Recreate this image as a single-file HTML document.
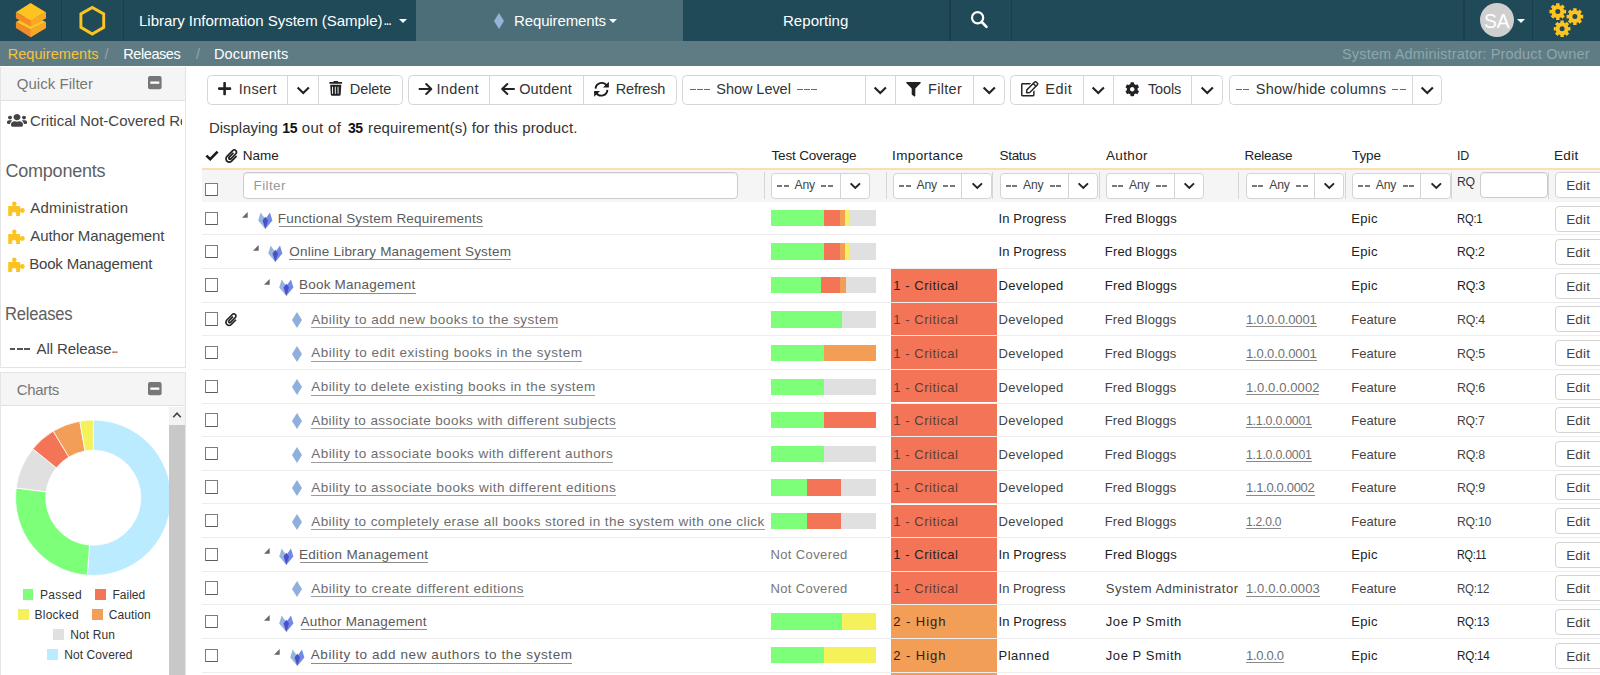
<!DOCTYPE html>
<html><head><meta charset="utf-8"><title>Requirements</title>
<style>
html,body{margin:0;padding:0;}
body{width:1600px;height:675px;overflow:hidden;background:#fff;font-family:"Liberation Sans",sans-serif;}
#root{position:relative;width:1600px;height:675px;overflow:hidden;background:#fff;}
.a{position:absolute;box-sizing:border-box;}
.t{white-space:pre;}
svg{position:absolute;overflow:visible;}

</style></head>
<body>
<div id="root">
<div class="a" style="left:0px;top:0px;width:1600px;height:41px;background:#204a58;"></div>
<div class="a" style="left:415.5px;top:0px;width:267px;height:41px;background:#4c6e78;"></div>
<div class="a" style="left:61px;top:0px;width:1.4px;height:41px;background:#1a3f4c;"></div>
<div class="a" style="left:122.8px;top:0px;width:1.4px;height:41px;background:#1a3f4c;"></div>
<div class="a" style="left:949.2px;top:0px;width:1.4px;height:41px;background:#1a3f4c;"></div>
<div class="a" style="left:1011px;top:0px;width:1.4px;height:41px;background:#1a3f4c;"></div>
<div class="a" style="left:1463.3px;top:0px;width:1.4px;height:41px;background:#1a3f4c;"></div>
<div class="a" style="left:1532px;top:0px;width:1.4px;height:41px;background:#1a3f4c;"></div>
<svg style="left:15px;top:2px" width="32" height="36" viewBox="15 2 32 36">
<polygon points="15.9,22 30.6,29.8 45.9,22 45.9,28.1 30.6,37.2 15.9,28.1" fill="#f58b27"/>
<polygon points="30.6,29.8 45.9,22 45.9,28.1 30.6,37.2" fill="#f9a825"/>
<polygon points="15.9,22 30.6,14.5 45.9,22 30.6,29.8" fill="#fdc421"/>
<polygon points="15.9,12.2 30.6,20 45.9,12.2 45.9,18.3 30.6,26.5 15.9,18.3" fill="#f58b27"/>
<polygon points="30.6,20 45.9,12.2 45.9,18.3 30.6,26.5" fill="#f9a825"/>
<polygon points="15.9,12.2 30.6,2.9 45.9,12.2 30.6,20" fill="#fdc421"/>
</svg>
<svg style="left:78px;top:4px" width="30" height="34" viewBox="78 4 30 34">
<polygon points="92.3,7.4 103.7,13.9 103.7,27.3 92.3,34 80.9,27.3 80.9,13.9" fill="none" stroke="#fdc421" stroke-width="2.9" stroke-linejoin="miter"/>
</svg>
<div class="a t" style="left:139.00px;top:9.90px;font-size:15px;line-height:21px;color:#fff;letter-spacing:-0.022px;">Library Information System (Sample)</div>
<div class="a t" style="left:383.90px;top:15.14px;font-size:10px;line-height:14px;color:#fff;letter-spacing:-0.250px;font-weight:700;transform:scaleX(0.9185);transform-origin:0 0;">...</div>
<div class="a" style="left:399px;top:19px;border-left:4px solid transparent;border-right:4px solid transparent;border-top:4.5px solid #fff"></div>
<svg style="left:494px;top:13px" width="10" height="16" viewBox="0 0 10 16"><polygon points="5,0 10,8 5,16 0,8" fill="#98b2d8"/></svg>
<div class="a t" style="left:514.00px;top:9.90px;font-size:15px;line-height:21px;color:#fff;letter-spacing:-0.125px;">Requirements</div>
<div class="a" style="left:608.8px;top:19px;border-left:4.1px solid transparent;border-right:4.1px solid transparent;border-top:4.6px solid #fff"></div>
<div class="a t" style="left:783.00px;top:9.90px;font-size:15px;line-height:21px;color:#fff;letter-spacing:0.038px;">Reporting</div>
<svg style="left:970px;top:10px" width="19" height="19" viewBox="0 0 19 19"><circle cx="7.6" cy="7.8" r="5.6" fill="none" stroke="#fff" stroke-width="2.2"/><line x1="11.8" y1="12" x2="16.5" y2="16.8" stroke="#fff" stroke-width="2.6" stroke-linecap="round"/></svg>
<div class="a" style="left:1480px;top:3px;width:34px;height:34px;background:#cfcfcf;border-radius:17px;"></div>
<div class="a t" style="left:1484.20px;top:7.64px;font-size:19.5px;line-height:27px;color:#fff;letter-spacing:-0.250px;transform:scaleX(0.9900);transform-origin:0 0;">SA</div>
<div class="a" style="left:1516.5px;top:19.3px;border-left:4.1px solid transparent;border-right:4.1px solid transparent;border-top:4.6px solid #fff"></div>
<svg style="left:0;top:0" width="1600" height="41"><path d="M1566.11,9.81 L1566.11,13.39 L1564.04,13.26 L1563.39,14.84 L1564.94,16.21 L1562.41,18.74 L1561.04,17.19 L1559.46,17.84 L1559.59,19.91 L1556.01,19.91 L1556.14,17.84 L1554.56,17.19 L1553.19,18.74 L1550.66,16.21 L1552.21,14.84 L1551.56,13.26 L1549.49,13.39 L1549.49,9.81 L1551.56,9.94 L1552.21,8.36 L1550.66,6.99 L1553.19,4.46 L1554.56,6.01 L1556.14,5.36 L1556.01,3.29 L1559.59,3.29 L1559.46,5.36 L1561.04,6.01 L1562.41,4.46 L1564.94,6.99 L1563.39,8.36 L1564.04,9.94Z M1560.30,11.60 A2.5,2.5 0 1,0 1555.30,11.60 A2.5,2.5 0 1,0 1560.30,11.60Z" fill="#fdc421" fill-rule="evenodd"/><path d="M1583.21,14.81 L1583.21,18.39 L1581.14,18.26 L1580.49,19.84 L1582.04,21.21 L1579.51,23.74 L1578.14,22.19 L1576.56,22.84 L1576.69,24.91 L1573.11,24.91 L1573.24,22.84 L1571.66,22.19 L1570.29,23.74 L1567.76,21.21 L1569.31,19.84 L1568.66,18.26 L1566.59,18.39 L1566.59,14.81 L1568.66,14.94 L1569.31,13.36 L1567.76,11.99 L1570.29,9.46 L1571.66,11.01 L1573.24,10.36 L1573.11,8.29 L1576.69,8.29 L1576.56,10.36 L1578.14,11.01 L1579.51,9.46 L1582.04,11.99 L1580.49,13.36 L1581.14,14.94Z M1577.40,16.60 A2.5,2.5 0 1,0 1572.40,16.60 A2.5,2.5 0 1,0 1577.40,16.60Z" fill="#fdc421" fill-rule="evenodd"/><path d="M1570.41,27.01 L1570.41,30.59 L1568.34,30.46 L1567.69,32.04 L1569.24,33.41 L1566.71,35.94 L1565.34,34.39 L1563.76,35.04 L1563.89,37.11 L1560.31,37.11 L1560.44,35.04 L1558.86,34.39 L1557.49,35.94 L1554.96,33.41 L1556.51,32.04 L1555.86,30.46 L1553.79,30.59 L1553.79,27.01 L1555.86,27.14 L1556.51,25.56 L1554.96,24.19 L1557.49,21.66 L1558.86,23.21 L1560.44,22.56 L1560.31,20.49 L1563.89,20.49 L1563.76,22.56 L1565.34,23.21 L1566.71,21.66 L1569.24,24.19 L1567.69,25.56 L1568.34,27.14Z M1564.60,28.80 A2.5,2.5 0 1,0 1559.60,28.80 A2.5,2.5 0 1,0 1564.60,28.80Z" fill="#fdc421" fill-rule="evenodd"/></svg>
<div class="a" style="left:0px;top:41px;width:1600px;height:25.2px;background:#5f7c85;"></div>
<div class="a t" style="left:7.75px;top:43.98px;font-size:14.5px;line-height:20px;color:#f7c23c;letter-spacing:0.044px;">Requirements</div>
<div class="a t" style="left:104.50px;top:43.98px;font-size:14.5px;line-height:20px;color:#8fa5ab;">/</div>
<div class="a t" style="left:123.25px;top:43.98px;font-size:14.5px;line-height:20px;color:#fff;letter-spacing:-0.421px;">Releases</div>
<div class="a t" style="left:196.00px;top:43.98px;font-size:14.5px;line-height:20px;color:#8fa5ab;">/</div>
<div class="a t" style="left:214.00px;top:43.98px;font-size:14.5px;line-height:20px;color:#fff;letter-spacing:0.114px;">Documents</div>
<div class="a t" style="left:1342.00px;top:43.98px;font-size:14.5px;line-height:20px;color:#8ea6ac;letter-spacing:0.170px;">System Administrator: Product Owner</div>
<div class="a" style="left:0px;top:66.5px;width:186px;height:301.5px;background:#fff;border:1px solid #e4e4e4;border-top:none;"></div>
<div class="a" style="left:1px;top:66.5px;width:184px;height:34.5px;background:#f5f5f5;border-bottom:1px solid #e0e0e0;"></div>
<div class="a t" style="left:16.75px;top:73.30px;font-size:15px;line-height:21px;color:#777;letter-spacing:0.037px;">Quick Filter</div>
<svg style="left:147.5px;top:75.5px" width="14" height="14" viewBox="0 0 14 14"><rect x="0" y="0" width="13.6" height="13.2" rx="2" fill="#777"/><rect x="2.3" y="5.5" width="9" height="2.3" fill="#fff"/></svg>
<svg style="left:6.6px;top:113.4px" width="20" height="14.6" viewBox="0 0 640 512" preserveAspectRatio="none"><path fill="#444" d="M96 224c35.300 0 64-28.700 64-64s-28.700-64-64-64-64 28.700-64 64 28.700 64 64 64zm448 0c35.300 0 64-28.700 64-64s-28.700-64-64-64-64 28.700-64 64 28.700 64 64 64zm32 32h-64c-17.600 0-33.500 7.100-45.100 18.600 40.300 22.100 68.900 62 75.100 109.400h66c17.700 0 32-14.300 32-32v-32c0-35.300-28.700-64-64-64zm-256 0c61.900 0 112-50.100 112-112S381.900 32 320 32 208 82.100 208 144s50.100 112 112 112zm76.800 32h-8.300c-20.800 10-43.900 16-68.500 16s-47.600-6-68.500-16h-8.300C179.600 288 128 339.600 128 403.200V432c0 26.500 21.500 48 48 48h288c26.500 0 48-21.500 48-48v-28.800c0-63.600-51.600-115.200-115.200-115.200zm-223.700-13.400C161.500 263.100 145.600 256 128 256H64c-35.300 0-64 28.700-64 64v32c0 17.700 14.300 32 32 32h65.900c6.300-47.400 34.900-87.300 75.200-109.400z"/></svg>
<div class="a t" style="left:30.00px;top:110.40px;font-size:15px;line-height:21px;color:#444;width:152px;overflow:hidden;">Critical Not-Covered Re</div>
<div class="a t" style="left:5.50px;top:159.26px;font-size:18px;line-height:25px;color:#606060;letter-spacing:-0.229px;font-weight:400;">Components</div>
<svg style="left:7.6px;top:201.4px" width="17.2" height="15.2" viewBox="0 0 17.2 15.2">
<rect x="0.2" y="4.9" width="11.9" height="10" rx="0.6" fill="#fdc421"/>
<circle cx="6.3" cy="2.7" r="2.25" fill="#fdc421"/><rect x="5" y="3" width="2.6" height="2.5" fill="#fdc421"/>
<circle cx="14.3" cy="9.5" r="2.45" fill="#fdc421"/><rect x="11.5" y="8" width="2.2" height="3" fill="#fdc421"/>
<circle cx="6.1" cy="13.3" r="2.2" fill="#fff"/><rect x="4.9" y="13.6" width="2.4" height="1.8" fill="#fff"/>
</svg>
<div class="a t" style="left:30.25px;top:197.30px;font-size:15px;line-height:21px;color:#444;letter-spacing:0.216px;">Administration</div>
<svg style="left:7.6px;top:229.4px" width="17.2" height="15.2" viewBox="0 0 17.2 15.2">
<rect x="0.2" y="4.9" width="11.9" height="10" rx="0.6" fill="#fdc421"/>
<circle cx="6.3" cy="2.7" r="2.25" fill="#fdc421"/><rect x="5" y="3" width="2.6" height="2.5" fill="#fdc421"/>
<circle cx="14.3" cy="9.5" r="2.45" fill="#fdc421"/><rect x="11.5" y="8" width="2.2" height="3" fill="#fdc421"/>
<circle cx="6.1" cy="13.3" r="2.2" fill="#fff"/><rect x="4.9" y="13.6" width="2.4" height="1.8" fill="#fff"/>
</svg>
<div class="a t" style="left:30.25px;top:225.30px;font-size:15px;line-height:21px;color:#444;letter-spacing:-0.109px;">Author Management</div>
<svg style="left:7.6px;top:257.4px" width="17.2" height="15.2" viewBox="0 0 17.2 15.2">
<rect x="0.2" y="4.9" width="11.9" height="10" rx="0.6" fill="#fdc421"/>
<circle cx="6.3" cy="2.7" r="2.25" fill="#fdc421"/><rect x="5" y="3" width="2.6" height="2.5" fill="#fdc421"/>
<circle cx="14.3" cy="9.5" r="2.45" fill="#fdc421"/><rect x="11.5" y="8" width="2.2" height="3" fill="#fdc421"/>
<circle cx="6.1" cy="13.3" r="2.2" fill="#fff"/><rect x="4.9" y="13.6" width="2.4" height="1.8" fill="#fff"/>
</svg>
<div class="a t" style="left:29.25px;top:253.30px;font-size:15px;line-height:21px;color:#444;letter-spacing:-0.196px;">Book Management</div>
<div class="a t" style="left:5.45px;top:302.24px;font-size:17.5px;line-height:24px;color:#606060;letter-spacing:-0.250px;transform:scaleX(0.9481);transform-origin:0 0;">Releases</div>
<div class="a" style="left:9.6px;top:348.4px;width:5.83px;height:1.3px;background:#555;"></div>
<div class="a" style="left:16.83px;top:348.4px;width:5.83px;height:1.3px;background:#555;"></div>
<div class="a" style="left:24.07px;top:348.4px;width:5.83px;height:1.3px;background:#555;"></div>
<div class="a t" style="left:36.60px;top:338.10px;font-size:15px;line-height:21px;color:#444;letter-spacing:-0.093px;">All Release</div>
<div class="a t" style="left:111.90px;top:342.49px;font-size:11px;line-height:15px;color:#444;letter-spacing:-0.250px;font-weight:700;transform:scaleX(0.6502);transform-origin:0 0;">...</div>
<div class="a" style="left:0px;top:372.4px;width:186px;height:310px;background:#fff;border:1px solid #e4e4e4;"></div>
<div class="a" style="left:1px;top:373.4px;width:184px;height:33.1px;background:#f5f5f5;border-bottom:1px solid #e0e0e0;"></div>
<div class="a t" style="left:16.75px;top:378.80px;font-size:15px;line-height:21px;color:#777;letter-spacing:-0.336px;">Charts</div>
<svg style="left:147.5px;top:382px" width="14" height="14" viewBox="0 0 14 14"><rect x="0" y="0" width="13.6" height="13.2" rx="2" fill="#777"/><rect x="2.3" y="5.5" width="9" height="2.3" fill="#fff"/></svg>
<div class="a" style="left:169px;top:407px;width:16px;height:270px;background:#c8c8c8;"></div>
<div class="a" style="left:169px;top:407px;width:16px;height:18px;background:#f3f3f3;"></div>
<svg style="left:172px;top:411px" width="10" height="8" viewBox="0 0 10 8"><polyline points="1.2,6.2 5,2.2 8.8,6.2" fill="none" stroke="#444" stroke-width="1.6"/></svg>
<div class="a" style="left:1px;top:407px;width:168px;height:268px;overflow:hidden"><svg style="left:-1px;top:-407px" width="186" height="675"><path d="M93.30,420.00 A77.75,77.75 0 1,1 87.20,575.26 L89.57,545.10 A47.5,47.5 0 1,0 93.30,450.25Z" fill="#bbebfe" stroke="#fff" stroke-width="0.8"/><path d="M87.20,575.26 A77.75,77.75 0 0,1 16.16,488.01 L46.17,491.80 A47.5,47.5 0 0,0 89.57,545.10Z" fill="#7eff7a" stroke="#fff" stroke-width="0.8"/><path d="M16.16,488.01 A77.75,77.75 0 0,1 32.88,448.82 L56.39,467.86 A47.5,47.5 0 0,0 46.17,491.80Z" fill="#e0e0e0" stroke="#fff" stroke-width="0.8"/><path d="M32.88,448.82 A77.75,77.75 0 0,1 53.26,431.11 L68.84,457.03 A47.5,47.5 0 0,0 56.39,467.86Z" fill="#f47457" stroke="#fff" stroke-width="0.8"/><path d="M53.26,431.11 A77.75,77.75 0 0,1 79.80,421.18 L85.05,450.97 A47.5,47.5 0 0,0 68.84,457.03Z" fill="#f29e56" stroke="#fff" stroke-width="0.8"/><path d="M79.80,421.18 A77.75,77.75 0 0,1 93.30,420.00 L93.30,450.25 A47.5,47.5 0 0,0 85.05,450.97Z" fill="#f4f15a" stroke="#fff" stroke-width="0.8"/></svg></div>
<div class="a" style="left:22.75px;top:589.1px;width:10.6px;height:10.8px;background:#7eff7a;"></div>
<div class="a t" style="left:40.00px;top:587.34px;font-size:12px;line-height:17px;color:#333;letter-spacing:0.330px;">Passed</div>
<div class="a" style="left:95px;top:589.1px;width:10.6px;height:10.8px;background:#f47457;"></div>
<div class="a t" style="left:112.50px;top:587.34px;font-size:12px;line-height:17px;color:#333;">Failed</div>
<div class="a" style="left:18px;top:608.8px;width:10.6px;height:10.8px;background:#f4f15a;"></div>
<div class="a t" style="left:34.50px;top:607.04px;font-size:12px;line-height:17px;color:#333;letter-spacing:0.247px;">Blocked</div>
<div class="a" style="left:92px;top:608.8px;width:10.6px;height:10.8px;background:#f29e56;"></div>
<div class="a t" style="left:108.75px;top:607.04px;font-size:12px;line-height:17px;color:#333;letter-spacing:0.094px;">Caution</div>
<div class="a" style="left:53px;top:628.8px;width:10.6px;height:10.8px;background:#e0e0e0;"></div>
<div class="a t" style="left:70.25px;top:627.04px;font-size:12px;line-height:17px;color:#333;letter-spacing:0.109px;">Not Run</div>
<div class="a" style="left:47px;top:648.9px;width:10.6px;height:10.8px;background:#bbebfe;"></div>
<div class="a t" style="left:64.25px;top:647.14px;font-size:12px;line-height:17px;color:#333;letter-spacing:0.081px;">Not Covered</div>
<div class="a" style="left:207.3px;top:75px;width:195.5px;height:29.5px;background:#fff;border:1px solid #d6d6d6;border-radius:4.5px;"></div>
<div class="a" style="left:287.0px;top:75.5px;width:1px;height:28.5px;background:#d6d6d6;"></div>
<div class="a" style="left:317.7px;top:75.5px;width:1px;height:28.5px;background:#d6d6d6;"></div>
<svg style="left:218.3px;top:82.2px" width="13.2" height="13.2" viewBox="0 0 13.2 13.2"><rect x="5.3" y="0" width="2.6" height="13.2" rx="0.8" fill="#222"/><rect x="0" y="5.3" width="13.2" height="2.6" rx="0.8" fill="#222"/></svg>
<div class="a t" style="left:238.75px;top:79.18px;font-size:14.5px;line-height:20px;color:#333;letter-spacing:0.303px;">Insert</div>
<svg style="left:295.85px;top:85.50px" width="14.5" height="8.6" viewBox="-1 -1 14.5 8.6"><polyline points="0.6,0.4 6.25,6.0 11.9,0.4" fill="none" stroke="#222" stroke-width="2.1" stroke-linecap="butt" stroke-linejoin="miter"/></svg>
<svg style="left:328.7px;top:81px" width="13.5" height="14.8" viewBox="0 0 448 512"><path fill="#222" d="M432 32H312l-9.400-18.700A24 24 0 0 0 281.100 0H166.800a23.720 23.720 0 0 0-21.400 13.300L136 32H16A16 16 0 0 0 0 48v32a16 16 0 0 0 16 16h416a16 16 0 0 0 16-16V48a16 16 0 0 0-16-16zM53.200 467a48 48 0 0 0 47.900 45h245.800a48 48 0 0 0 47.900-45L416 128H32zM288 208a16 16 0 0 1 32 0v224a16 16 0 0 1-32 0zm-96 0a16 16 0 0 1 32 0v224a16 16 0 0 1-32 0zm-96 0a16 16 0 0 1 32 0v224a16 16 0 0 1-32 0z"/></svg>
<div class="a t" style="left:349.75px;top:79.18px;font-size:14.5px;line-height:20px;color:#333;letter-spacing:-0.070px;">Delete</div>
<div class="a" style="left:408.2px;top:75px;width:268.8px;height:29.5px;background:#fff;border:1px solid #d6d6d6;border-radius:4.5px;"></div>
<div class="a" style="left:489.0px;top:75.5px;width:1px;height:28.5px;background:#d6d6d6;"></div>
<div class="a" style="left:582.5px;top:75.5px;width:1px;height:28.5px;background:#d6d6d6;"></div>
<svg style="left:419px;top:83.3px" width="13.5" height="12" viewBox="0 0 13.5 12"><path d="M0.5,6 H12 M7.2,1 L12.3,6 L7.2,11" fill="none" stroke="#222" stroke-width="2" stroke-linecap="round" stroke-linejoin="round"/></svg>
<div class="a t" style="left:436.50px;top:79.18px;font-size:14.5px;line-height:20px;color:#333;letter-spacing:0.343px;">Indent</div>
<svg style="left:500.5px;top:83.3px" width="13.5" height="12" viewBox="0 0 13.5 12"><path d="M13,6 H1.5 M6.3,1 L1.2,6 L6.3,11" fill="none" stroke="#222" stroke-width="2" stroke-linecap="round" stroke-linejoin="round"/></svg>
<div class="a t" style="left:519.20px;top:79.18px;font-size:14.5px;line-height:20px;color:#333;letter-spacing:0.156px;">Outdent</div>
<svg style="left:593px;top:80.5px" width="17" height="16.5" viewBox="0 0 17 16.5">
<path d="M2.6,7.6 A6,6 0 0 1 13.6,4.6" fill="none" stroke="#1c1c1c" stroke-width="1.9"/>
<path d="M14.4,8.9 A6,6 0 0 1 3.4,11.9" fill="none" stroke="#1c1c1c" stroke-width="1.9"/>
<polygon points="15.9,0.7 15.9,6.6 10,6.6" fill="#1c1c1c"/>
<polygon points="1.1,15.8 1.1,9.9 7,9.9" fill="#1c1c1c"/>
</svg>
<div class="a t" style="left:615.75px;top:79.18px;font-size:14.5px;line-height:20px;color:#333;letter-spacing:-0.201px;">Refresh</div>
<div class="a" style="left:682px;top:75px;width:322.5px;height:29.5px;background:#fff;border:1px solid #d6d6d6;border-radius:4.5px;"></div>
<div class="a" style="left:865.0px;top:75.5px;width:1px;height:28.5px;background:#d6d6d6;"></div>
<div class="a" style="left:894.5px;top:75.5px;width:1px;height:28.5px;background:#d6d6d6;"></div>
<div class="a" style="left:972.5px;top:75.5px;width:1px;height:28.5px;background:#d6d6d6;"></div>
<div class="a" style="left:689.75px;top:88.77px;width:5.82px;height:1.3px;background:#6a6a6a;"></div>
<div class="a" style="left:696.97px;top:88.77px;width:5.82px;height:1.3px;background:#6a6a6a;"></div>
<div class="a" style="left:704.18px;top:88.77px;width:5.82px;height:1.3px;background:#6a6a6a;"></div>
<div class="a t" style="left:716.25px;top:79.18px;font-size:14.5px;line-height:20px;color:#333;letter-spacing:-0.038px;">Show Level</div>
<div class="a" style="left:796.9px;top:88.77px;width:5.85px;height:1.3px;background:#6a6a6a;"></div>
<div class="a" style="left:804.15px;top:88.77px;width:5.85px;height:1.3px;background:#6a6a6a;"></div>
<div class="a" style="left:811.4px;top:88.77px;width:5.85px;height:1.3px;background:#6a6a6a;"></div>
<svg style="left:873.05px;top:85.50px" width="14.5" height="8.6" viewBox="-1 -1 14.5 8.6"><polyline points="0.6,0.4 6.25,6.0 11.9,0.4" fill="none" stroke="#222" stroke-width="2.1" stroke-linecap="butt" stroke-linejoin="miter"/></svg>
<svg style="left:906px;top:82px" width="15" height="14.5" viewBox="0 0 512 512"><path fill="#222" d="M487.976 0H24.028C2.710 0-8.047 25.866 7.058 40.971L192 225.941V432c0 7.831 3.821 15.170 10.237 19.662l80 55.980C298.020 518.690 320 507.493 320 487.980V225.941l184.947-184.970C520.021 25.896 509.338 0 487.976 0z"/></svg>
<div class="a t" style="left:928.00px;top:79.18px;font-size:14.5px;line-height:20px;color:#333;letter-spacing:0.321px;">Filter</div>
<svg style="left:981.55px;top:85.50px" width="14.5" height="8.6" viewBox="-1 -1 14.5 8.6"><polyline points="0.6,0.4 6.25,6.0 11.9,0.4" fill="none" stroke="#222" stroke-width="2.1" stroke-linecap="butt" stroke-linejoin="miter"/></svg>
<div class="a" style="left:1010px;top:75px;width:213px;height:29.5px;background:#fff;border:1px solid #d6d6d6;border-radius:4.5px;"></div>
<div class="a" style="left:1082.5px;top:75.5px;width:1px;height:28.5px;background:#d6d6d6;"></div>
<div class="a" style="left:1112.5px;top:75.5px;width:1px;height:28.5px;background:#d6d6d6;"></div>
<div class="a" style="left:1191.2px;top:75.5px;width:1px;height:28.5px;background:#d6d6d6;"></div>
<svg style="left:1021px;top:81px" width="17.5" height="15.5" viewBox="0 0 576 512"><path fill="#222" d="M402.300 344.900l32-32c5-5 13.700-1.500 13.700 5.700V464c0 26.500-21.500 48-48 48H48c-26.500 0-48-21.500-48-48V112c0-26.500 21.500-48 48-48h273.500c7.100 0 10.700 8.600 5.700 13.700l-32 32c-1.500 1.500-3.500 2.300-5.700 2.300H48v352h352V350.500c0-2.100.800-4.100 2.300-5.600zm156.600-201.800L296.300 405.700l-90.400 10c-26.200 2.900-48.500-19.200-45.600-45.600l10-90.400L432.900 17.100c22.900-22.900 59.900-22.900 82.700 0l43.200 43.200c22.900 22.900 22.900 60 .100 82.800zM460.100 174L402 115.900 216.200 301.800l-7.300 65.300 65.300-7.300L460.100 174zm64.800-79.700l-43.200-43.200c-4.100-4.100-10.800-4.100-14.800 0L436 82l58.100 58.100 30.900-30.900c4-4.200 4-10.800-.100-14.900z"/></svg>
<div class="a t" style="left:1045.25px;top:79.18px;font-size:14.5px;line-height:20px;color:#333;letter-spacing:0.514px;">Edit</div>
<svg style="left:1090.75px;top:85.50px" width="14.5" height="8.6" viewBox="-1 -1 14.5 8.6"><polyline points="0.6,0.4 6.25,6.0 11.9,0.4" fill="none" stroke="#222" stroke-width="2.1" stroke-linecap="butt" stroke-linejoin="miter"/></svg>
<svg style="left:1124.5px;top:82px" width="14.5" height="14.5" viewBox="0 0 512 512"><path fill="#222" d="M487.400 315.700l-42.600-24.600c4.300-23.200 4.300-47 0-70.200l42.600-24.600c4.900-2.800 7.100-8.600 5.500-14-11.100-35.600-30-67.800-54.700-94.600-3.800-4.100-10-5.100-14.800-2.300L380.800 110c-17.900-15.400-38.500-27.300-60.800-35.100V25.800c0-5.600-3.900-10.500-9.400-11.700-36.700-8.200-74.300-7.800-109.200 0-5.500 1.200-9.400 6.100-9.400 11.700V75c-22.200 7.900-42.800 19.800-60.800 35.100L88.700 85.500c-4.900-2.800-11-1.900-14.800 2.300-24.700 26.700-43.600 58.900-54.700 94.600-1.700 5.400.600 11.200 5.500 14L67.300 221c-4.300 23.200-4.300 47 0 70.200l-42.600 24.600c-4.900 2.800-7.100 8.600-5.500 14 11.100 35.600 30 67.800 54.700 94.600 3.800 4.100 10 5.100 14.800 2.300l42.600-24.600c17.900 15.400 38.500 27.300 60.800 35.100v49.200c0 5.600 3.900 10.500 9.400 11.700 36.700 8.200 74.300 7.800 109.200 0 5.500-1.200 9.400-6.100 9.400-11.700v-49.200c22.200-7.900 42.800-19.800 60.800-35.100l42.600 24.600c4.900 2.800 11 1.900 14.800-2.300 24.700-26.700 43.600-58.900 54.700-94.600 1.500-5.500-.700-11.300-5.600-14.100zM256 336c-44.100 0-80-35.900-80-80s35.900-80 80-80 80 35.900 80 80-35.900 80-80 80z"/></svg>
<div class="a t" style="left:1148.00px;top:79.18px;font-size:14.5px;line-height:20px;color:#333;letter-spacing:-0.150px;">Tools</div>
<svg style="left:1200.25px;top:85.50px" width="14.5" height="8.6" viewBox="-1 -1 14.5 8.6"><polyline points="0.6,0.4 6.25,6.0 11.9,0.4" fill="none" stroke="#222" stroke-width="2.1" stroke-linecap="butt" stroke-linejoin="miter"/></svg>
<div class="a" style="left:1228.5px;top:75px;width:213.5px;height:29.5px;background:#fff;border:1px solid #d6d6d6;border-radius:4.5px;"></div>
<div class="a" style="left:1411.5px;top:75.5px;width:1px;height:28.5px;background:#d6d6d6;"></div>
<div class="a" style="left:1235.75px;top:88.77px;width:6.05px;height:1.3px;background:#6a6a6a;"></div>
<div class="a" style="left:1243.2px;top:88.77px;width:6.05px;height:1.3px;background:#6a6a6a;"></div>
<div class="a t" style="left:1255.70px;top:79.18px;font-size:14.5px;line-height:20px;color:#333;letter-spacing:0.282px;">Show/hide columns</div>
<div class="a" style="left:1392.2px;top:88.77px;width:6.05px;height:1.3px;background:#6a6a6a;"></div>
<div class="a" style="left:1399.65px;top:88.77px;width:6.05px;height:1.3px;background:#6a6a6a;"></div>
<svg style="left:1419.75px;top:85.50px" width="14.5" height="8.6" viewBox="-1 -1 14.5 8.6"><polyline points="0.6,0.4 6.25,6.0 11.9,0.4" fill="none" stroke="#222" stroke-width="2.1" stroke-linecap="butt" stroke-linejoin="miter"/></svg>
<div class="a t" style="left:209.00px;top:117.30px;font-size:15px;line-height:21px;color:#333;letter-spacing:-0.040px;">Displaying</div>
<div class="a t" style="left:282.33px;top:118.15px;font-size:14px;line-height:20px;color:#111;letter-spacing:-0.450px;font-weight:700;">15</div>
<div class="a t" style="left:301.75px;top:117.30px;font-size:15px;line-height:21px;color:#333;letter-spacing:0.328px;">out of</div>
<div class="a t" style="left:347.96px;top:118.15px;font-size:14px;line-height:20px;color:#111;letter-spacing:-0.450px;font-weight:700;">35</div>
<div class="a t" style="left:368.00px;top:117.30px;font-size:15px;line-height:21px;color:#333;letter-spacing:0.140px;">requirement(s) for this product.</div>
<svg style="left:204.5px;top:149.5px" width="14" height="11" viewBox="0 0 14 11"><polyline points="1.4,5.6 5.2,9.2 12.6,1.6" fill="none" stroke="#1a1a1a" stroke-width="2.6" stroke-linejoin="miter"/></svg>
<svg style="left:224.5px;top:148.5px" width="12.5" height="14.0" viewBox="0 0 448 512"><path fill="#222" d="M43.246 466.142c-58.430-60.289-57.341-157.511 1.386-217.581L254.392 34c44.316-45.332 116.351-45.336 160.671 0 43.890 44.894 43.943 117.329 0 162.276L232.214 383.128c-29.855 30.537-78.633 30.111-107.982-.998-28.275-29.970-27.368-77.473 1.452-106.953l143.743-146.835c6.182-6.314 16.312-6.422 22.626-.241l22.861 22.379c6.315 6.182 6.422 16.312.241 22.626L171.427 319.927c-4.932 5.045-5.236 13.428-.648 18.292 4.372 4.634 11.245 4.711 15.688.165l182.849-186.851c19.613-20.062 19.613-52.725-.011-72.798-19.189-19.627-49.957-19.637-69.154 0L90.390 293.295c-34.763 35.560-35.299 93.120-1.191 128.313 34.010 35.093 88.985 35.137 123.058.286l172.060-175.999c6.177-6.319 16.307-6.433 22.626-.256l22.877 22.364c6.319 6.177 6.434 16.307.256 22.626l-172.060 175.998c-59.576 60.938-155.943 60.216-214.770-.485z"/></svg>
<div class="a t" style="left:242.75px;top:145.82px;font-size:13.5px;line-height:19px;color:#222;">Name</div>
<div class="a t" style="left:771.50px;top:145.82px;font-size:13.5px;line-height:19px;color:#222;letter-spacing:-0.170px;">Test Coverage</div>
<div class="a t" style="left:892.00px;top:145.82px;font-size:13.5px;line-height:19px;color:#222;letter-spacing:0.386px;">Importance</div>
<div class="a t" style="left:999.50px;top:145.82px;font-size:13.5px;line-height:19px;color:#222;letter-spacing:-0.304px;">Status</div>
<div class="a t" style="left:1106.00px;top:145.82px;font-size:13.5px;line-height:19px;color:#222;letter-spacing:0.344px;">Author</div>
<div class="a t" style="left:1244.50px;top:145.82px;font-size:13.5px;line-height:19px;color:#222;letter-spacing:-0.254px;">Release</div>
<div class="a t" style="left:1352.00px;top:145.82px;font-size:13.5px;line-height:19px;color:#222;letter-spacing:-0.087px;">Type</div>
<div class="a t" style="left:1457.08px;top:145.82px;font-size:13.5px;line-height:19px;color:#222;letter-spacing:-0.250px;transform:scaleX(0.9199);transform-origin:0 0;">ID</div>
<div class="a t" style="left:1554.00px;top:145.82px;font-size:13.5px;line-height:19px;color:#222;letter-spacing:0.329px;">Edit</div>
<div class="a" style="left:202px;top:169.5px;width:1398px;height:32px;background:#f5f5f5;"></div>
<div class="a" style="left:202px;top:168.3px;width:1398px;height:1.5px;background:#fbdfb4;"></div>
<div class="a" style="left:204.8px;top:183px;width:13.2px;height:13.4px;background:#fff;border:1px solid #7c7c7c;border-radius:0.8px;border-bottom-color:#5c5c5c;"></div>
<div class="a" style="left:243.2px;top:172.3px;width:494.5px;height:26.8px;background:#fff;border:1px solid #ccc;border-radius:4px;box-shadow:inset 0 1px 1px rgba(0,0,0,.075);"></div>
<div class="a t" style="left:253.50px;top:175.82px;font-size:13.5px;line-height:19px;color:#999;letter-spacing:0.399px;">Filter</div>
<div class="a" style="left:771px;top:173px;width:98.5px;height:25.6px;background:#fff;border:1px solid #d4d4d4;border-radius:4px;"></div>
<div class="a" style="left:839.5px;top:173.5px;width:1px;height:24.6px;background:#d4d4d4;"></div>
<div class="a" style="left:777.0px;top:185.47px;width:5.17px;height:1.2px;background:#777;"></div>
<div class="a" style="left:783.58px;top:185.47px;width:5.17px;height:1.2px;background:#777;"></div>
<div class="a t" style="left:794.60px;top:177.47px;font-size:12.2px;line-height:17px;color:#444;letter-spacing:-0.254px;">Any</div>
<div class="a" style="left:821.25px;top:185.47px;width:5.17px;height:1.2px;background:#777;"></div>
<div class="a" style="left:827.83px;top:185.47px;width:5.17px;height:1.2px;background:#777;"></div>
<svg style="left:848.75px;top:182.00px" width="12.6" height="7.6" viewBox="-1 -1 12.6 7.6"><polyline points="0.6,0.4 5.3,5.0 10.0,0.4" fill="none" stroke="#222" stroke-width="1.9" stroke-linecap="butt" stroke-linejoin="miter"/></svg>
<div class="a" style="left:893px;top:173px;width:98.5px;height:25.6px;background:#fff;border:1px solid #d4d4d4;border-radius:4px;"></div>
<div class="a" style="left:961.25px;top:173.5px;width:1px;height:24.6px;background:#d4d4d4;"></div>
<div class="a" style="left:899.0px;top:185.47px;width:5.17px;height:1.2px;background:#777;"></div>
<div class="a" style="left:905.58px;top:185.47px;width:5.17px;height:1.2px;background:#777;"></div>
<div class="a t" style="left:916.60px;top:177.47px;font-size:12.2px;line-height:17px;color:#444;letter-spacing:-0.254px;">Any</div>
<div class="a" style="left:943.25px;top:185.47px;width:5.17px;height:1.2px;background:#777;"></div>
<div class="a" style="left:949.83px;top:185.47px;width:5.17px;height:1.2px;background:#777;"></div>
<svg style="left:970.62px;top:182.00px" width="12.6" height="7.6" viewBox="-1 -1 12.6 7.6"><polyline points="0.6,0.4 5.3,5.0 10.0,0.4" fill="none" stroke="#222" stroke-width="1.9" stroke-linecap="butt" stroke-linejoin="miter"/></svg>
<div class="a" style="left:999.5px;top:173px;width:98.5px;height:25.6px;background:#fff;border:1px solid #d4d4d4;border-radius:4px;"></div>
<div class="a" style="left:1067.5px;top:173.5px;width:1px;height:24.6px;background:#d4d4d4;"></div>
<div class="a" style="left:1005.5px;top:185.47px;width:5.17px;height:1.2px;background:#777;"></div>
<div class="a" style="left:1012.08px;top:185.47px;width:5.17px;height:1.2px;background:#777;"></div>
<div class="a t" style="left:1023.10px;top:177.47px;font-size:12.2px;line-height:17px;color:#444;letter-spacing:-0.254px;">Any</div>
<div class="a" style="left:1049.75px;top:185.47px;width:5.17px;height:1.2px;background:#777;"></div>
<div class="a" style="left:1056.33px;top:185.47px;width:5.17px;height:1.2px;background:#777;"></div>
<svg style="left:1077.00px;top:182.00px" width="12.6" height="7.6" viewBox="-1 -1 12.6 7.6"><polyline points="0.6,0.4 5.3,5.0 10.0,0.4" fill="none" stroke="#222" stroke-width="1.9" stroke-linecap="butt" stroke-linejoin="miter"/></svg>
<div class="a" style="left:1105.5px;top:173px;width:98.5px;height:25.6px;background:#fff;border:1px solid #d4d4d4;border-radius:4px;"></div>
<div class="a" style="left:1174.0px;top:173.5px;width:1px;height:24.6px;background:#d4d4d4;"></div>
<div class="a" style="left:1111.5px;top:185.47px;width:5.17px;height:1.2px;background:#777;"></div>
<div class="a" style="left:1118.08px;top:185.47px;width:5.17px;height:1.2px;background:#777;"></div>
<div class="a t" style="left:1129.10px;top:177.47px;font-size:12.2px;line-height:17px;color:#444;letter-spacing:-0.254px;">Any</div>
<div class="a" style="left:1155.75px;top:185.47px;width:5.17px;height:1.2px;background:#777;"></div>
<div class="a" style="left:1162.33px;top:185.47px;width:5.17px;height:1.2px;background:#777;"></div>
<svg style="left:1183.25px;top:182.00px" width="12.6" height="7.6" viewBox="-1 -1 12.6 7.6"><polyline points="0.6,0.4 5.3,5.0 10.0,0.4" fill="none" stroke="#222" stroke-width="1.9" stroke-linecap="butt" stroke-linejoin="miter"/></svg>
<div class="a" style="left:1245.75px;top:173px;width:98.25px;height:25.6px;background:#fff;border:1px solid #d4d4d4;border-radius:4px;"></div>
<div class="a" style="left:1313.5px;top:173.5px;width:1px;height:24.6px;background:#d4d4d4;"></div>
<div class="a" style="left:1251.75px;top:185.47px;width:5.17px;height:1.2px;background:#777;"></div>
<div class="a" style="left:1258.33px;top:185.47px;width:5.17px;height:1.2px;background:#777;"></div>
<div class="a t" style="left:1269.35px;top:177.47px;font-size:12.2px;line-height:17px;color:#444;letter-spacing:-0.254px;">Any</div>
<div class="a" style="left:1296.0px;top:185.47px;width:5.17px;height:1.2px;background:#777;"></div>
<div class="a" style="left:1302.58px;top:185.47px;width:5.17px;height:1.2px;background:#777;"></div>
<svg style="left:1323.00px;top:182.00px" width="12.6" height="7.6" viewBox="-1 -1 12.6 7.6"><polyline points="0.6,0.4 5.3,5.0 10.0,0.4" fill="none" stroke="#222" stroke-width="1.9" stroke-linecap="butt" stroke-linejoin="miter"/></svg>
<div class="a" style="left:1352.25px;top:173px;width:98.25px;height:25.6px;background:#fff;border:1px solid #d4d4d4;border-radius:4px;"></div>
<div class="a" style="left:1420.0px;top:173.5px;width:1px;height:24.6px;background:#d4d4d4;"></div>
<div class="a" style="left:1358.25px;top:185.47px;width:5.17px;height:1.2px;background:#777;"></div>
<div class="a" style="left:1364.83px;top:185.47px;width:5.17px;height:1.2px;background:#777;"></div>
<div class="a t" style="left:1375.85px;top:177.47px;font-size:12.2px;line-height:17px;color:#444;letter-spacing:-0.254px;">Any</div>
<div class="a" style="left:1402.5px;top:185.47px;width:5.17px;height:1.2px;background:#777;"></div>
<div class="a" style="left:1409.08px;top:185.47px;width:5.17px;height:1.2px;background:#777;"></div>
<svg style="left:1429.50px;top:182.00px" width="12.6" height="7.6" viewBox="-1 -1 12.6 7.6"><polyline points="0.6,0.4 5.3,5.0 10.0,0.4" fill="none" stroke="#222" stroke-width="1.9" stroke-linecap="butt" stroke-linejoin="miter"/></svg>
<div class="a" style="left:763.75px;top:172px;width:1px;height:27px;background:#d6d6d6;"></div>
<div class="a" style="left:885.75px;top:172px;width:1px;height:27px;background:#d6d6d6;"></div>
<div class="a" style="left:992.1px;top:172px;width:1px;height:27px;background:#d6d6d6;"></div>
<div class="a" style="left:1098.75px;top:172px;width:1px;height:27px;background:#d6d6d6;"></div>
<div class="a" style="left:1238.0px;top:172px;width:1px;height:27px;background:#d6d6d6;"></div>
<div class="a" style="left:1344.7px;top:172px;width:1px;height:27px;background:#d6d6d6;"></div>
<div class="a" style="left:1451.2px;top:172px;width:1px;height:27px;background:#d6d6d6;"></div>
<div class="a" style="left:1548.0px;top:172px;width:1px;height:27px;background:#d6d6d6;"></div>
<div class="a t" style="left:1457.06px;top:173.00px;font-size:13px;line-height:18px;color:#333;letter-spacing:-0.250px;transform:scaleX(0.9372);transform-origin:0 0;">RQ</div>
<div class="a" style="left:1480px;top:172.3px;width:67.5px;height:26.2px;background:#fff;border:1px solid #ccc;border-radius:4px;box-shadow:inset 0 1px 1px rgba(0,0,0,.075);"></div>
<div class="a" style="left:1555px;top:172.4px;width:60px;height:26px;background:#fff;border:1px solid #d4d4d4;border-radius:4px;"></div>
<div class="a t" style="left:1566.20px;top:176.42px;font-size:13.5px;line-height:19px;color:#444;letter-spacing:0.163px;">Edit</div>
<div class="a" style="left:204.8px;top:212.1px;width:13.2px;height:13.4px;background:#fff;border:1px solid #7c7c7c;border-radius:0.8px;border-bottom-color:#5c5c5c;"></div>
<svg style="left:242.45px;top:212.29999999999998px" width="5.7" height="5.7" viewBox="0 0 6 6"><polygon points="6,0 6,6 0,6" fill="#666"/></svg>
<svg style="left:257.65px;top:212.4px" width="14.6" height="17.4" viewBox="0 0 14.4 17" preserveAspectRatio="none">
<polygon points="2.6,0.6 6.6,6 7.2,16.6 0.2,8.2" fill="#94b5dc"/>
<polygon points="11.8,0.6 7.8,6 7.2,16.6 14.2,8.2" fill="#7289e6"/>
<polygon points="7.2,4.6 9.9,8.4 7.2,16.6 4.5,8.4" fill="#4b4fc9"/>
</svg>
<div class="a t" style="left:277.75px;top:209.02px;font-size:13.5px;line-height:19px;color:#5a5a5a;letter-spacing:0.213px;">Functional System Requirements</div><div class="a" style="left:278.75px;top:226.40px;width:204.25px;height:1px;background:#8c8c8c"></div>
<div class="a" style="left:771.0px;top:209.79999999999998px;width:52.8px;height:16.3px;background:#7eff7a;"></div>
<div class="a" style="left:823.5px;top:209.79999999999998px;width:16.68px;height:16.3px;background:#f47457;"></div>
<div class="a" style="left:839.88px;top:209.79999999999998px;width:5.13px;height:16.3px;background:#f29e56;"></div>
<div class="a" style="left:844.71px;top:209.79999999999998px;width:5.34px;height:16.3px;background:#f4f15a;"></div>
<div class="a" style="left:849.75px;top:209.79999999999998px;width:26.55px;height:16.3px;background:#e0e0e0;"></div>
<div class="a t" style="left:998.50px;top:210.30px;font-size:13px;line-height:18px;color:#222;letter-spacing:0.128px;">In Progress</div>
<div class="a t" style="left:1104.75px;top:210.30px;font-size:13px;line-height:18px;color:#222;letter-spacing:0.191px;">Fred Bloggs</div>
<div class="a t" style="left:1351.25px;top:210.30px;font-size:13px;line-height:18px;color:#222;letter-spacing:0.320px;">Epic</div>
<div class="a t" style="left:1457.44px;top:210.30px;font-size:13px;line-height:18px;color:#222;letter-spacing:-0.250px;transform:scaleX(0.8638);transform-origin:0 0;">RQ:1</div>
<div class="a" style="left:1555px;top:206.2px;width:60px;height:26px;background:#fff;border:1px solid #d4d4d4;border-radius:4px;"></div>
<div class="a t" style="left:1566.20px;top:210.22px;font-size:13.5px;line-height:19px;color:#444;letter-spacing:0.163px;">Edit</div>
<div class="a" style="left:202px;top:234.33999999999997px;width:1398px;height:1px;background:#ededed;"></div>
<div class="a" style="left:204.8px;top:244.83999999999997px;width:13.2px;height:13.4px;background:#fff;border:1px solid #7c7c7c;border-radius:0.8px;border-bottom-color:#5c5c5c;"></div>
<svg style="left:252.95px;top:245.03999999999996px" width="5.7" height="5.7" viewBox="0 0 6 6"><polygon points="6,0 6,6 0,6" fill="#666"/></svg>
<svg style="left:268.15px;top:245.14px" width="14.6" height="17.4" viewBox="0 0 14.4 17" preserveAspectRatio="none">
<polygon points="2.6,0.6 6.6,6 7.2,16.6 0.2,8.2" fill="#94b5dc"/>
<polygon points="11.8,0.6 7.8,6 7.2,16.6 14.2,8.2" fill="#7289e6"/>
<polygon points="7.2,4.6 9.9,8.4 7.2,16.6 4.5,8.4" fill="#4b4fc9"/>
</svg>
<div class="a t" style="left:289.25px;top:241.76px;font-size:13.5px;line-height:19px;color:#5a5a5a;letter-spacing:0.206px;">Online Library Management System</div><div class="a" style="left:289.25px;top:259.14px;width:221.50px;height:1px;background:#8c8c8c"></div>
<div class="a" style="left:771.0px;top:243.33999999999997px;width:52.8px;height:16.3px;background:#7eff7a;"></div>
<div class="a" style="left:823.5px;top:243.33999999999997px;width:16.68px;height:16.3px;background:#f47457;"></div>
<div class="a" style="left:839.88px;top:243.33999999999997px;width:5.13px;height:16.3px;background:#f29e56;"></div>
<div class="a" style="left:844.71px;top:243.33999999999997px;width:5.34px;height:16.3px;background:#f4f15a;"></div>
<div class="a" style="left:849.75px;top:243.33999999999997px;width:26.55px;height:16.3px;background:#e0e0e0;"></div>
<div class="a t" style="left:998.50px;top:243.04px;font-size:13px;line-height:18px;color:#222;letter-spacing:0.128px;">In Progress</div>
<div class="a t" style="left:1104.75px;top:243.04px;font-size:13px;line-height:18px;color:#222;letter-spacing:0.191px;">Fred Bloggs</div>
<div class="a t" style="left:1351.25px;top:243.04px;font-size:13px;line-height:18px;color:#222;letter-spacing:0.320px;">Epic</div>
<div class="a t" style="left:1457.37px;top:243.04px;font-size:13px;line-height:18px;color:#222;letter-spacing:-0.250px;transform:scaleX(0.9344);transform-origin:0 0;">RQ:2</div>
<div class="a" style="left:1555px;top:238.93999999999997px;width:60px;height:26px;background:#fff;border:1px solid #d4d4d4;border-radius:4px;"></div>
<div class="a t" style="left:1566.20px;top:242.96px;font-size:13.5px;line-height:19px;color:#444;letter-spacing:0.163px;">Edit</div>
<div class="a" style="left:202px;top:267.98px;width:1398px;height:1px;background:#ededed;"></div>
<div class="a" style="left:204.8px;top:278.48px;width:13.2px;height:13.4px;background:#fff;border:1px solid #7c7c7c;border-radius:0.8px;border-bottom-color:#5c5c5c;"></div>
<div class="a" style="left:890.75px;top:269.08000000000004px;width:105.75px;height:32.44px;background:#f47457;"></div>
<div class="a t" style="left:893.25px;top:276.68px;font-size:13px;line-height:18px;color:#2a2220;letter-spacing:0.557px;">1 - Critical</div>
<svg style="left:263.7px;top:278.68px" width="5.7" height="5.7" viewBox="0 0 6 6"><polygon points="6,0 6,6 0,6" fill="#666"/></svg>
<svg style="left:278.9px;top:278.78000000000003px" width="14.6" height="17.4" viewBox="0 0 14.4 17" preserveAspectRatio="none">
<polygon points="2.6,0.6 6.6,6 7.2,16.6 0.2,8.2" fill="#94b5dc"/>
<polygon points="11.8,0.6 7.8,6 7.2,16.6 14.2,8.2" fill="#7289e6"/>
<polygon points="7.2,4.6 9.9,8.4 7.2,16.6 4.5,8.4" fill="#4b4fc9"/>
</svg>
<div class="a t" style="left:299.00px;top:275.40px;font-size:13.5px;line-height:19px;color:#5a5a5a;letter-spacing:0.209px;">Book Management</div><div class="a" style="left:300.00px;top:292.78px;width:115.50px;height:1px;background:#8c8c8c"></div>
<div class="a" style="left:771.0px;top:276.98px;width:50.28px;height:16.3px;background:#7eff7a;"></div>
<div class="a" style="left:820.98px;top:276.98px;width:19.41px;height:16.3px;background:#f47457;"></div>
<div class="a" style="left:840.09px;top:276.98px;width:5.97px;height:16.3px;background:#f29e56;"></div>
<div class="a" style="left:845.76px;top:276.98px;width:30.54px;height:16.3px;background:#e0e0e0;"></div>
<div class="a t" style="left:998.50px;top:276.68px;font-size:13px;line-height:18px;color:#222;letter-spacing:0.322px;">Developed</div>
<div class="a t" style="left:1104.75px;top:276.68px;font-size:13px;line-height:18px;color:#222;letter-spacing:0.191px;">Fred Bloggs</div>
<div class="a t" style="left:1351.25px;top:276.68px;font-size:13px;line-height:18px;color:#222;letter-spacing:0.320px;">Epic</div>
<div class="a t" style="left:1457.35px;top:276.68px;font-size:13px;line-height:18px;color:#222;letter-spacing:-0.250px;transform:scaleX(0.9520);transform-origin:0 0;">RQ:3</div>
<div class="a" style="left:1555px;top:272.58000000000004px;width:60px;height:26px;background:#fff;border:1px solid #d4d4d4;border-radius:4px;"></div>
<div class="a t" style="left:1566.20px;top:276.60px;font-size:13.5px;line-height:19px;color:#444;letter-spacing:0.163px;">Edit</div>
<div class="a" style="left:202px;top:301.62px;width:1398px;height:1px;background:#ededed;"></div>
<div class="a" style="left:204.8px;top:312.22px;width:13.2px;height:13.4px;background:#fff;border:1px solid #7c7c7c;border-radius:0.8px;border-bottom-color:#5c5c5c;"></div>
<div class="a" style="left:890.75px;top:302.72px;width:105.75px;height:32.44px;background:#f47457;"></div>
<div class="a t" style="left:893.25px;top:311.22px;font-size:13px;line-height:18px;color:#5e3d33;letter-spacing:0.557px;">1 - Critical</div>
<svg style="left:225px;top:312.62px" width="11.875" height="13.299999999999999" viewBox="0 0 448 512"><path fill="#222" d="M43.246 466.142c-58.430-60.289-57.341-157.511 1.386-217.581L254.392 34c44.316-45.332 116.351-45.336 160.671 0 43.890 44.894 43.943 117.329 0 162.276L232.214 383.128c-29.855 30.537-78.633 30.111-107.982-.998-28.275-29.970-27.368-77.473 1.452-106.953l143.743-146.835c6.182-6.314 16.312-6.422 22.626-.241l22.861 22.379c6.315 6.182 6.422 16.312.241 22.626L171.427 319.927c-4.932 5.045-5.236 13.428-.648 18.292 4.372 4.634 11.245 4.711 15.688.165l182.849-186.851c19.613-20.062 19.613-52.725-.011-72.798-19.189-19.627-49.957-19.637-69.154 0L90.390 293.295c-34.763 35.560-35.299 93.120-1.191 128.313 34.010 35.093 88.985 35.137 123.058.286l172.060-175.999c6.177-6.319 16.307-6.433 22.626-.256l22.877 22.364c6.319 6.177 6.434 16.307.256 22.626l-172.060 175.998c-59.576 60.938-155.943 60.216-214.770-.485z"/></svg>
<svg style="left:291.5px;top:312.12px" width="10" height="16" viewBox="0 0 10 16"><polygon points="5,0 10,8 5,16 0,8" fill="#8fb0dc"/></svg>
<div class="a t" style="left:311.25px;top:309.84px;font-size:13.5px;line-height:19px;color:#6e6e6e;letter-spacing:0.470px;">Ability to add new books to the system</div><div class="a" style="left:311.25px;top:327.22px;width:246.75px;height:1px;background:#9c9c9c"></div>
<div class="a" style="left:771.0px;top:311.22px;width:71.07px;height:16.3px;background:#7eff7a;"></div>
<div class="a" style="left:841.77px;top:311.22px;width:34.53px;height:16.3px;background:#e0e0e0;"></div>
<div class="a t" style="left:998.50px;top:311.22px;font-size:13px;line-height:18px;color:#444;letter-spacing:0.322px;">Developed</div>
<div class="a t" style="left:1104.75px;top:311.22px;font-size:13px;line-height:18px;color:#444;letter-spacing:0.141px;">Fred Bloggs</div>
<div class="a t" style="left:1246.00px;top:311.22px;font-size:13px;line-height:18px;color:#707070;letter-spacing:-0.142px;">1.0.0.0.0001</div><div class="a" style="left:1246.00px;top:326.42px;width:70.50px;height:1px;background:#8a8a8a"></div>
<div class="a t" style="left:1351.25px;top:311.22px;font-size:13px;line-height:18px;color:#444;letter-spacing:0.030px;">Feature</div>
<div class="a t" style="left:1457.35px;top:311.22px;font-size:13px;line-height:18px;color:#444;letter-spacing:-0.250px;transform:scaleX(0.9520);transform-origin:0 0;">RQ:4</div>
<div class="a" style="left:1555px;top:306.22px;width:60px;height:26px;background:#fff;border:1px solid #d4d4d4;border-radius:4px;"></div>
<div class="a t" style="left:1566.20px;top:310.24px;font-size:13.5px;line-height:19px;color:#444;letter-spacing:0.163px;">Edit</div>
<div class="a" style="left:202px;top:335.26px;width:1398px;height:1px;background:#ededed;"></div>
<div class="a" style="left:204.8px;top:345.86px;width:13.2px;height:13.4px;background:#fff;border:1px solid #7c7c7c;border-radius:0.8px;border-bottom-color:#5c5c5c;"></div>
<div class="a" style="left:890.75px;top:336.36px;width:105.75px;height:32.44px;background:#f47457;"></div>
<div class="a t" style="left:893.25px;top:344.86px;font-size:13px;line-height:18px;color:#5e3d33;letter-spacing:0.557px;">1 - Critical</div>
<svg style="left:291.5px;top:345.76px" width="10" height="16" viewBox="0 0 10 16"><polygon points="5,0 10,8 5,16 0,8" fill="#8fb0dc"/></svg>
<div class="a t" style="left:311.25px;top:343.48px;font-size:13.5px;line-height:19px;color:#6e6e6e;letter-spacing:0.503px;">Ability to edit existing books in the system</div><div class="a" style="left:311.25px;top:360.86px;width:270.50px;height:1px;background:#9c9c9c"></div>
<div class="a" style="left:771.0px;top:344.86px;width:52.8px;height:16.3px;background:#7eff7a;"></div>
<div class="a" style="left:823.5px;top:344.86px;width:52.8px;height:16.3px;background:#f29e56;"></div>
<div class="a t" style="left:998.50px;top:344.86px;font-size:13px;line-height:18px;color:#444;letter-spacing:0.322px;">Developed</div>
<div class="a t" style="left:1104.75px;top:344.86px;font-size:13px;line-height:18px;color:#444;letter-spacing:0.141px;">Fred Bloggs</div>
<div class="a t" style="left:1246.00px;top:344.86px;font-size:13px;line-height:18px;color:#707070;letter-spacing:-0.142px;">1.0.0.0.0001</div><div class="a" style="left:1246.00px;top:360.06px;width:70.50px;height:1px;background:#8a8a8a"></div>
<div class="a t" style="left:1351.25px;top:344.86px;font-size:13px;line-height:18px;color:#444;letter-spacing:0.030px;">Feature</div>
<div class="a t" style="left:1457.35px;top:344.86px;font-size:13px;line-height:18px;color:#444;letter-spacing:-0.250px;transform:scaleX(0.9520);transform-origin:0 0;">RQ:5</div>
<div class="a" style="left:1555px;top:339.86px;width:60px;height:26px;background:#fff;border:1px solid #d4d4d4;border-radius:4px;"></div>
<div class="a t" style="left:1566.20px;top:343.88px;font-size:13.5px;line-height:19px;color:#444;letter-spacing:0.163px;">Edit</div>
<div class="a" style="left:202px;top:368.9px;width:1398px;height:1px;background:#ededed;"></div>
<div class="a" style="left:204.8px;top:379.5px;width:13.2px;height:13.4px;background:#fff;border:1px solid #7c7c7c;border-radius:0.8px;border-bottom-color:#5c5c5c;"></div>
<div class="a" style="left:890.75px;top:370.0px;width:105.75px;height:32.44px;background:#f47457;"></div>
<div class="a t" style="left:893.25px;top:378.50px;font-size:13px;line-height:18px;color:#5e3d33;letter-spacing:0.557px;">1 - Critical</div>
<svg style="left:291.5px;top:379.4px" width="10" height="16" viewBox="0 0 10 16"><polygon points="5,0 10,8 5,16 0,8" fill="#8fb0dc"/></svg>
<div class="a t" style="left:311.25px;top:377.12px;font-size:13.5px;line-height:19px;color:#6e6e6e;letter-spacing:0.441px;">Ability to delete existing books in the system</div><div class="a" style="left:311.25px;top:394.50px;width:283.75px;height:1px;background:#9c9c9c"></div>
<div class="a" style="left:771.0px;top:378.5px;width:52.8px;height:16.3px;background:#7eff7a;"></div>
<div class="a" style="left:823.5px;top:378.5px;width:52.8px;height:16.3px;background:#e0e0e0;"></div>
<div class="a t" style="left:998.50px;top:378.50px;font-size:13px;line-height:18px;color:#444;letter-spacing:0.322px;">Developed</div>
<div class="a t" style="left:1104.75px;top:378.50px;font-size:13px;line-height:18px;color:#444;letter-spacing:0.141px;">Fred Bloggs</div>
<div class="a t" style="left:1246.00px;top:378.50px;font-size:13px;line-height:18px;color:#707070;letter-spacing:0.108px;">1.0.0.0.0002</div><div class="a" style="left:1246.00px;top:393.70px;width:73.25px;height:1px;background:#8a8a8a"></div>
<div class="a t" style="left:1351.25px;top:378.50px;font-size:13px;line-height:18px;color:#444;letter-spacing:0.030px;">Feature</div>
<div class="a t" style="left:1457.35px;top:378.50px;font-size:13px;line-height:18px;color:#444;letter-spacing:-0.250px;transform:scaleX(0.9520);transform-origin:0 0;">RQ:6</div>
<div class="a" style="left:1555px;top:373.5px;width:60px;height:26px;background:#fff;border:1px solid #d4d4d4;border-radius:4px;"></div>
<div class="a t" style="left:1566.20px;top:377.52px;font-size:13.5px;line-height:19px;color:#444;letter-spacing:0.163px;">Edit</div>
<div class="a" style="left:202px;top:402.53999999999996px;width:1398px;height:1px;background:#ededed;"></div>
<div class="a" style="left:204.8px;top:413.14px;width:13.2px;height:13.4px;background:#fff;border:1px solid #7c7c7c;border-radius:0.8px;border-bottom-color:#5c5c5c;"></div>
<div class="a" style="left:890.75px;top:403.64px;width:105.75px;height:32.44px;background:#f47457;"></div>
<div class="a t" style="left:893.25px;top:412.14px;font-size:13px;line-height:18px;color:#5e3d33;letter-spacing:0.557px;">1 - Critical</div>
<svg style="left:291.5px;top:413.03999999999996px" width="10" height="16" viewBox="0 0 10 16"><polygon points="5,0 10,8 5,16 0,8" fill="#8fb0dc"/></svg>
<div class="a t" style="left:311.25px;top:410.76px;font-size:13.5px;line-height:19px;color:#6e6e6e;letter-spacing:0.400px;">Ability to associate books with different subjects</div><div class="a" style="left:311.25px;top:428.14px;width:304.75px;height:1px;background:#9c9c9c"></div>
<div class="a" style="left:771.0px;top:412.14px;width:52.8px;height:16.3px;background:#7eff7a;"></div>
<div class="a" style="left:823.5px;top:412.14px;width:52.8px;height:16.3px;background:#f47457;"></div>
<div class="a t" style="left:998.50px;top:412.14px;font-size:13px;line-height:18px;color:#444;letter-spacing:0.322px;">Developed</div>
<div class="a t" style="left:1104.75px;top:412.14px;font-size:13px;line-height:18px;color:#444;letter-spacing:0.141px;">Fred Bloggs</div>
<div class="a t" style="left:1246.00px;top:412.14px;font-size:13px;line-height:18px;color:#707070;letter-spacing:-0.250px;transform:scaleX(0.9487);transform-origin:0 0;">1.1.0.0.0001</div><div class="a" style="left:1246.00px;top:427.34px;width:65.75px;height:1px;background:#8a8a8a"></div>
<div class="a t" style="left:1351.25px;top:412.14px;font-size:13px;line-height:18px;color:#444;letter-spacing:0.030px;">Feature</div>
<div class="a t" style="left:1457.37px;top:412.14px;font-size:13px;line-height:18px;color:#444;letter-spacing:-0.250px;transform:scaleX(0.9344);transform-origin:0 0;">RQ:7</div>
<div class="a" style="left:1555px;top:407.14px;width:60px;height:26px;background:#fff;border:1px solid #d4d4d4;border-radius:4px;"></div>
<div class="a t" style="left:1566.20px;top:411.16px;font-size:13.5px;line-height:19px;color:#444;letter-spacing:0.163px;">Edit</div>
<div class="a" style="left:202px;top:436.18px;width:1398px;height:1px;background:#ededed;"></div>
<div class="a" style="left:204.8px;top:446.78000000000003px;width:13.2px;height:13.4px;background:#fff;border:1px solid #7c7c7c;border-radius:0.8px;border-bottom-color:#5c5c5c;"></div>
<div class="a" style="left:890.75px;top:437.28000000000003px;width:105.75px;height:32.44px;background:#f47457;"></div>
<div class="a t" style="left:893.25px;top:445.78px;font-size:13px;line-height:18px;color:#5e3d33;letter-spacing:0.557px;">1 - Critical</div>
<svg style="left:291.5px;top:446.68px" width="10" height="16" viewBox="0 0 10 16"><polygon points="5,0 10,8 5,16 0,8" fill="#8fb0dc"/></svg>
<div class="a t" style="left:311.25px;top:444.40px;font-size:13.5px;line-height:19px;color:#6e6e6e;letter-spacing:0.440px;">Ability to associate books with different authors</div><div class="a" style="left:311.25px;top:461.78px;width:301.75px;height:1px;background:#9c9c9c"></div>
<div class="a" style="left:771.0px;top:445.78000000000003px;width:52.8px;height:16.3px;background:#7eff7a;"></div>
<div class="a" style="left:823.5px;top:445.78000000000003px;width:52.8px;height:16.3px;background:#e0e0e0;"></div>
<div class="a t" style="left:998.50px;top:445.78px;font-size:13px;line-height:18px;color:#444;letter-spacing:0.322px;">Developed</div>
<div class="a t" style="left:1104.75px;top:445.78px;font-size:13px;line-height:18px;color:#444;letter-spacing:0.141px;">Fred Bloggs</div>
<div class="a t" style="left:1246.00px;top:445.78px;font-size:13px;line-height:18px;color:#707070;letter-spacing:-0.250px;transform:scaleX(0.9487);transform-origin:0 0;">1.1.0.0.0001</div><div class="a" style="left:1246.00px;top:460.98px;width:65.75px;height:1px;background:#8a8a8a"></div>
<div class="a t" style="left:1351.25px;top:445.78px;font-size:13px;line-height:18px;color:#444;letter-spacing:0.030px;">Feature</div>
<div class="a t" style="left:1457.35px;top:445.78px;font-size:13px;line-height:18px;color:#444;letter-spacing:-0.250px;transform:scaleX(0.9520);transform-origin:0 0;">RQ:8</div>
<div class="a" style="left:1555px;top:440.78000000000003px;width:60px;height:26px;background:#fff;border:1px solid #d4d4d4;border-radius:4px;"></div>
<div class="a t" style="left:1566.20px;top:444.80px;font-size:13.5px;line-height:19px;color:#444;letter-spacing:0.163px;">Edit</div>
<div class="a" style="left:202px;top:469.82px;width:1398px;height:1px;background:#ededed;"></div>
<div class="a" style="left:204.8px;top:480.42px;width:13.2px;height:13.4px;background:#fff;border:1px solid #7c7c7c;border-radius:0.8px;border-bottom-color:#5c5c5c;"></div>
<div class="a" style="left:890.75px;top:470.92px;width:105.75px;height:32.44px;background:#f47457;"></div>
<div class="a t" style="left:893.25px;top:479.42px;font-size:13px;line-height:18px;color:#5e3d33;letter-spacing:0.557px;">1 - Critical</div>
<svg style="left:291.5px;top:480.32px" width="10" height="16" viewBox="0 0 10 16"><polygon points="5,0 10,8 5,16 0,8" fill="#8fb0dc"/></svg>
<div class="a t" style="left:311.25px;top:478.04px;font-size:13.5px;line-height:19px;color:#6e6e6e;letter-spacing:0.461px;">Ability to associate books with different editions</div><div class="a" style="left:311.25px;top:495.42px;width:304.75px;height:1px;background:#9c9c9c"></div>
<div class="a" style="left:771.0px;top:479.42px;width:36.0px;height:16.3px;background:#7eff7a;"></div>
<div class="a" style="left:806.7px;top:479.42px;width:34.95px;height:16.3px;background:#f47457;"></div>
<div class="a" style="left:841.35px;top:479.42px;width:34.95px;height:16.3px;background:#e0e0e0;"></div>
<div class="a t" style="left:998.50px;top:479.42px;font-size:13px;line-height:18px;color:#444;letter-spacing:0.322px;">Developed</div>
<div class="a t" style="left:1104.75px;top:479.42px;font-size:13px;line-height:18px;color:#444;letter-spacing:0.141px;">Fred Bloggs</div>
<div class="a t" style="left:1246.00px;top:479.42px;font-size:13px;line-height:18px;color:#707070;letter-spacing:-0.323px;">1.1.0.0.0002</div><div class="a" style="left:1246.00px;top:494.62px;width:68.50px;height:1px;background:#8a8a8a"></div>
<div class="a t" style="left:1351.25px;top:479.42px;font-size:13px;line-height:18px;color:#444;letter-spacing:0.030px;">Feature</div>
<div class="a t" style="left:1457.35px;top:479.42px;font-size:13px;line-height:18px;color:#444;letter-spacing:-0.250px;transform:scaleX(0.9520);transform-origin:0 0;">RQ:9</div>
<div class="a" style="left:1555px;top:474.42px;width:60px;height:26px;background:#fff;border:1px solid #d4d4d4;border-radius:4px;"></div>
<div class="a t" style="left:1566.20px;top:478.44px;font-size:13.5px;line-height:19px;color:#444;letter-spacing:0.163px;">Edit</div>
<div class="a" style="left:202px;top:503.46px;width:1398px;height:1px;background:#ededed;"></div>
<div class="a" style="left:204.8px;top:514.06px;width:13.2px;height:13.4px;background:#fff;border:1px solid #7c7c7c;border-radius:0.8px;border-bottom-color:#5c5c5c;"></div>
<div class="a" style="left:890.75px;top:504.56px;width:105.75px;height:32.44px;background:#f47457;"></div>
<div class="a t" style="left:893.25px;top:513.06px;font-size:13px;line-height:18px;color:#5e3d33;letter-spacing:0.557px;">1 - Critical</div>
<svg style="left:291.5px;top:513.96px" width="10" height="16" viewBox="0 0 10 16"><polygon points="5,0 10,8 5,16 0,8" fill="#8fb0dc"/></svg>
<div class="a t" style="left:311.25px;top:511.68px;font-size:13.5px;line-height:19px;color:#6e6e6e;letter-spacing:0.425px;">Ability to completely erase all books stored in the system with one click</div><div class="a" style="left:311.25px;top:529.06px;width:453.25px;height:1px;background:#9c9c9c"></div>
<div class="a" style="left:771.0px;top:513.06px;width:36.0px;height:16.3px;background:#7eff7a;"></div>
<div class="a" style="left:806.7px;top:513.06px;width:34.95px;height:16.3px;background:#f47457;"></div>
<div class="a" style="left:841.35px;top:513.06px;width:34.95px;height:16.3px;background:#e0e0e0;"></div>
<div class="a t" style="left:998.50px;top:513.06px;font-size:13px;line-height:18px;color:#444;letter-spacing:0.322px;">Developed</div>
<div class="a t" style="left:1104.75px;top:513.06px;font-size:13px;line-height:18px;color:#444;letter-spacing:0.141px;">Fred Bloggs</div>
<div class="a t" style="left:1246.00px;top:513.06px;font-size:13px;line-height:18px;color:#707070;letter-spacing:-0.250px;transform:scaleX(0.9283);transform-origin:0 0;">1.2.0.0</div><div class="a" style="left:1246.00px;top:528.26px;width:35.30px;height:1px;background:#8a8a8a"></div>
<div class="a t" style="left:1351.25px;top:513.06px;font-size:13px;line-height:18px;color:#444;letter-spacing:0.030px;">Feature</div>
<div class="a t" style="left:1457.36px;top:513.06px;font-size:13px;line-height:18px;color:#444;letter-spacing:-0.250px;transform:scaleX(0.9394);transform-origin:0 0;">RQ:10</div>
<div class="a" style="left:1555px;top:508.06px;width:60px;height:26px;background:#fff;border:1px solid #d4d4d4;border-radius:4px;"></div>
<div class="a t" style="left:1566.20px;top:512.08px;font-size:13.5px;line-height:19px;color:#444;letter-spacing:0.163px;">Edit</div>
<div class="a" style="left:202px;top:537.0999999999999px;width:1398px;height:1px;background:#ededed;"></div>
<div class="a" style="left:204.8px;top:547.5999999999999px;width:13.2px;height:13.4px;background:#fff;border:1px solid #7c7c7c;border-radius:0.8px;border-bottom-color:#5c5c5c;"></div>
<div class="a" style="left:890.75px;top:538.1999999999999px;width:105.75px;height:32.44px;background:#f47457;"></div>
<div class="a t" style="left:893.25px;top:545.80px;font-size:13px;line-height:18px;color:#2a2220;letter-spacing:0.557px;">1 - Critical</div>
<svg style="left:263.7px;top:547.8px" width="5.7" height="5.7" viewBox="0 0 6 6"><polygon points="6,0 6,6 0,6" fill="#666"/></svg>
<svg style="left:278.9px;top:547.8999999999999px" width="14.6" height="17.4" viewBox="0 0 14.4 17" preserveAspectRatio="none">
<polygon points="2.6,0.6 6.6,6 7.2,16.6 0.2,8.2" fill="#94b5dc"/>
<polygon points="11.8,0.6 7.8,6 7.2,16.6 14.2,8.2" fill="#7289e6"/>
<polygon points="7.2,4.6 9.9,8.4 7.2,16.6 4.5,8.4" fill="#4b4fc9"/>
</svg>
<div class="a t" style="left:299.00px;top:544.52px;font-size:13.5px;line-height:19px;color:#5a5a5a;letter-spacing:0.304px;">Edition Management</div><div class="a" style="left:300.00px;top:561.90px;width:128.25px;height:1px;background:#8c8c8c"></div>
<div class="a t" style="left:770.50px;top:545.80px;font-size:13px;line-height:18px;color:#777;letter-spacing:0.375px;">Not Covered</div>
<div class="a t" style="left:998.50px;top:545.80px;font-size:13px;line-height:18px;color:#222;letter-spacing:0.128px;">In Progress</div>
<div class="a t" style="left:1104.75px;top:545.80px;font-size:13px;line-height:18px;color:#222;letter-spacing:0.191px;">Fred Bloggs</div>
<div class="a t" style="left:1351.25px;top:545.80px;font-size:13px;line-height:18px;color:#222;letter-spacing:0.320px;">Epic</div>
<div class="a t" style="left:1457.47px;top:545.80px;font-size:13px;line-height:18px;color:#222;letter-spacing:-0.250px;transform:scaleX(0.8320);transform-origin:0 0;">RQ:11</div>
<div class="a" style="left:1555px;top:541.6999999999999px;width:60px;height:26px;background:#fff;border:1px solid #d4d4d4;border-radius:4px;"></div>
<div class="a t" style="left:1566.20px;top:545.72px;font-size:13.5px;line-height:19px;color:#444;letter-spacing:0.163px;">Edit</div>
<div class="a" style="left:202px;top:570.74px;width:1398px;height:1px;background:#ededed;"></div>
<div class="a" style="left:204.8px;top:581.34px;width:13.2px;height:13.4px;background:#fff;border:1px solid #7c7c7c;border-radius:0.8px;border-bottom-color:#5c5c5c;"></div>
<div class="a" style="left:890.75px;top:571.84px;width:105.75px;height:32.44px;background:#f47457;"></div>
<div class="a t" style="left:893.25px;top:580.34px;font-size:13px;line-height:18px;color:#5e3d33;letter-spacing:0.557px;">1 - Critical</div>
<svg style="left:291.5px;top:581.24px" width="10" height="16" viewBox="0 0 10 16"><polygon points="5,0 10,8 5,16 0,8" fill="#8fb0dc"/></svg>
<div class="a t" style="left:311.25px;top:578.96px;font-size:13.5px;line-height:19px;color:#6e6e6e;letter-spacing:0.497px;">Ability to create different editions</div><div class="a" style="left:311.25px;top:596.34px;width:212.50px;height:1px;background:#9c9c9c"></div>
<div class="a t" style="left:770.50px;top:580.34px;font-size:13px;line-height:18px;color:#777;letter-spacing:0.375px;">Not Covered</div>
<div class="a t" style="left:998.50px;top:580.34px;font-size:13px;line-height:18px;color:#444;letter-spacing:0.053px;">In Progress</div>
<div class="a t" style="left:1105.75px;top:580.34px;font-size:13px;line-height:18px;color:#444;letter-spacing:0.495px;">System Administrator</div>
<div class="a t" style="left:1246.00px;top:580.34px;font-size:13px;line-height:18px;color:#707070;letter-spacing:0.140px;">1.0.0.0.0003</div><div class="a" style="left:1246.00px;top:595.54px;width:73.60px;height:1px;background:#8a8a8a"></div>
<div class="a t" style="left:1351.25px;top:580.34px;font-size:13px;line-height:18px;color:#444;letter-spacing:0.030px;">Feature</div>
<div class="a t" style="left:1457.42px;top:580.34px;font-size:13px;line-height:18px;color:#444;letter-spacing:-0.250px;transform:scaleX(0.8828);transform-origin:0 0;">RQ:12</div>
<div class="a" style="left:1555px;top:575.34px;width:60px;height:26px;background:#fff;border:1px solid #d4d4d4;border-radius:4px;"></div>
<div class="a t" style="left:1566.20px;top:579.36px;font-size:13.5px;line-height:19px;color:#444;letter-spacing:0.163px;">Edit</div>
<div class="a" style="left:202px;top:604.38px;width:1398px;height:1px;background:#ededed;"></div>
<div class="a" style="left:204.8px;top:614.88px;width:13.2px;height:13.4px;background:#fff;border:1px solid #7c7c7c;border-radius:0.8px;border-bottom-color:#5c5c5c;"></div>
<div class="a" style="left:890.75px;top:605.48px;width:105.75px;height:32.44px;background:#f29e56;"></div>
<div class="a t" style="left:893.25px;top:613.08px;font-size:13px;line-height:18px;color:#2a2220;letter-spacing:0.959px;">2 - High</div>
<svg style="left:264.2px;top:615.08px" width="5.7" height="5.7" viewBox="0 0 6 6"><polygon points="6,0 6,6 0,6" fill="#666"/></svg>
<svg style="left:279.4px;top:615.18px" width="14.6" height="17.4" viewBox="0 0 14.4 17" preserveAspectRatio="none">
<polygon points="2.6,0.6 6.6,6 7.2,16.6 0.2,8.2" fill="#94b5dc"/>
<polygon points="11.8,0.6 7.8,6 7.2,16.6 14.2,8.2" fill="#7289e6"/>
<polygon points="7.2,4.6 9.9,8.4 7.2,16.6 4.5,8.4" fill="#4b4fc9"/>
</svg>
<div class="a t" style="left:300.50px;top:611.80px;font-size:13.5px;line-height:19px;color:#5a5a5a;letter-spacing:0.230px;">Author Management</div><div class="a" style="left:300.50px;top:629.18px;width:126.25px;height:1px;background:#8c8c8c"></div>
<div class="a" style="left:771.0px;top:613.38px;width:71.07px;height:16.3px;background:#7eff7a;"></div>
<div class="a" style="left:841.77px;top:613.38px;width:34.53px;height:16.3px;background:#f4f15a;"></div>
<div class="a t" style="left:998.50px;top:613.08px;font-size:13px;line-height:18px;color:#222;letter-spacing:0.128px;">In Progress</div>
<div class="a t" style="left:1105.75px;top:613.08px;font-size:13px;line-height:18px;color:#222;letter-spacing:0.575px;">Joe P Smith</div>
<div class="a t" style="left:1351.25px;top:613.08px;font-size:13px;line-height:18px;color:#222;letter-spacing:0.320px;">Epic</div>
<div class="a t" style="left:1457.42px;top:613.08px;font-size:13px;line-height:18px;color:#222;letter-spacing:-0.250px;transform:scaleX(0.8828);transform-origin:0 0;">RQ:13</div>
<div class="a" style="left:1555px;top:608.98px;width:60px;height:26px;background:#fff;border:1px solid #d4d4d4;border-radius:4px;"></div>
<div class="a t" style="left:1566.20px;top:613.00px;font-size:13.5px;line-height:19px;color:#444;letter-spacing:0.163px;">Edit</div>
<div class="a" style="left:202px;top:638.02px;width:1398px;height:1px;background:#ededed;"></div>
<div class="a" style="left:204.8px;top:648.52px;width:13.2px;height:13.4px;background:#fff;border:1px solid #7c7c7c;border-radius:0.8px;border-bottom-color:#5c5c5c;"></div>
<div class="a" style="left:890.75px;top:639.12px;width:105.75px;height:32.44px;background:#f29e56;"></div>
<div class="a t" style="left:893.25px;top:646.72px;font-size:13px;line-height:18px;color:#2a2220;letter-spacing:0.959px;">2 - High</div>
<svg style="left:274.45px;top:648.72px" width="5.7" height="5.7" viewBox="0 0 6 6"><polygon points="6,0 6,6 0,6" fill="#666"/></svg>
<svg style="left:289.65px;top:648.8199999999999px" width="14.6" height="17.4" viewBox="0 0 14.4 17" preserveAspectRatio="none">
<polygon points="2.6,0.6 6.6,6 7.2,16.6 0.2,8.2" fill="#94b5dc"/>
<polygon points="11.8,0.6 7.8,6 7.2,16.6 14.2,8.2" fill="#7289e6"/>
<polygon points="7.2,4.6 9.9,8.4 7.2,16.6 4.5,8.4" fill="#4b4fc9"/>
</svg>
<div class="a t" style="left:310.75px;top:645.44px;font-size:13.5px;line-height:19px;color:#5a5a5a;letter-spacing:0.580px;">Ability to add new authors to the system</div><div class="a" style="left:310.75px;top:662.82px;width:261.00px;height:1px;background:#8c8c8c"></div>
<div class="a" style="left:771.0px;top:647.02px;width:52.8px;height:16.3px;background:#7eff7a;"></div>
<div class="a" style="left:823.5px;top:647.02px;width:52.8px;height:16.3px;background:#f4f15a;"></div>
<div class="a t" style="left:998.50px;top:646.72px;font-size:13px;line-height:18px;color:#222;letter-spacing:0.520px;">Planned</div>
<div class="a t" style="left:1105.75px;top:646.72px;font-size:13px;line-height:18px;color:#222;letter-spacing:0.575px;">Joe P Smith</div>
<div class="a t" style="left:1246.00px;top:646.72px;font-size:13px;line-height:18px;color:#707070;letter-spacing:-0.288px;">1.0.0.0</div><div class="a" style="left:1246.00px;top:661.92px;width:37.80px;height:1px;background:#8a8a8a"></div>
<div class="a t" style="left:1351.25px;top:646.72px;font-size:13px;line-height:18px;color:#222;letter-spacing:0.320px;">Epic</div>
<div class="a t" style="left:1457.40px;top:646.72px;font-size:13px;line-height:18px;color:#222;letter-spacing:-0.250px;transform:scaleX(0.8970);transform-origin:0 0;">RQ:14</div>
<div class="a" style="left:1555px;top:642.62px;width:60px;height:26px;background:#fff;border:1px solid #d4d4d4;border-radius:4px;"></div>
<div class="a t" style="left:1566.20px;top:646.64px;font-size:13.5px;line-height:19px;color:#444;letter-spacing:0.163px;">Edit</div>
<div class="a" style="left:202px;top:671.6600000000001px;width:1398px;height:1px;background:#ededed;"></div>
<div class="a" style="left:204.8px;top:682.2600000000001px;width:13.2px;height:13.4px;background:#fff;border:1px solid #7c7c7c;border-radius:0.8px;border-bottom-color:#5c5c5c;"></div>
<div class="a" style="left:890.75px;top:672.7600000000001px;width:105.75px;height:32.44px;background:#f29e56;"></div>
</div>
</body></html>
